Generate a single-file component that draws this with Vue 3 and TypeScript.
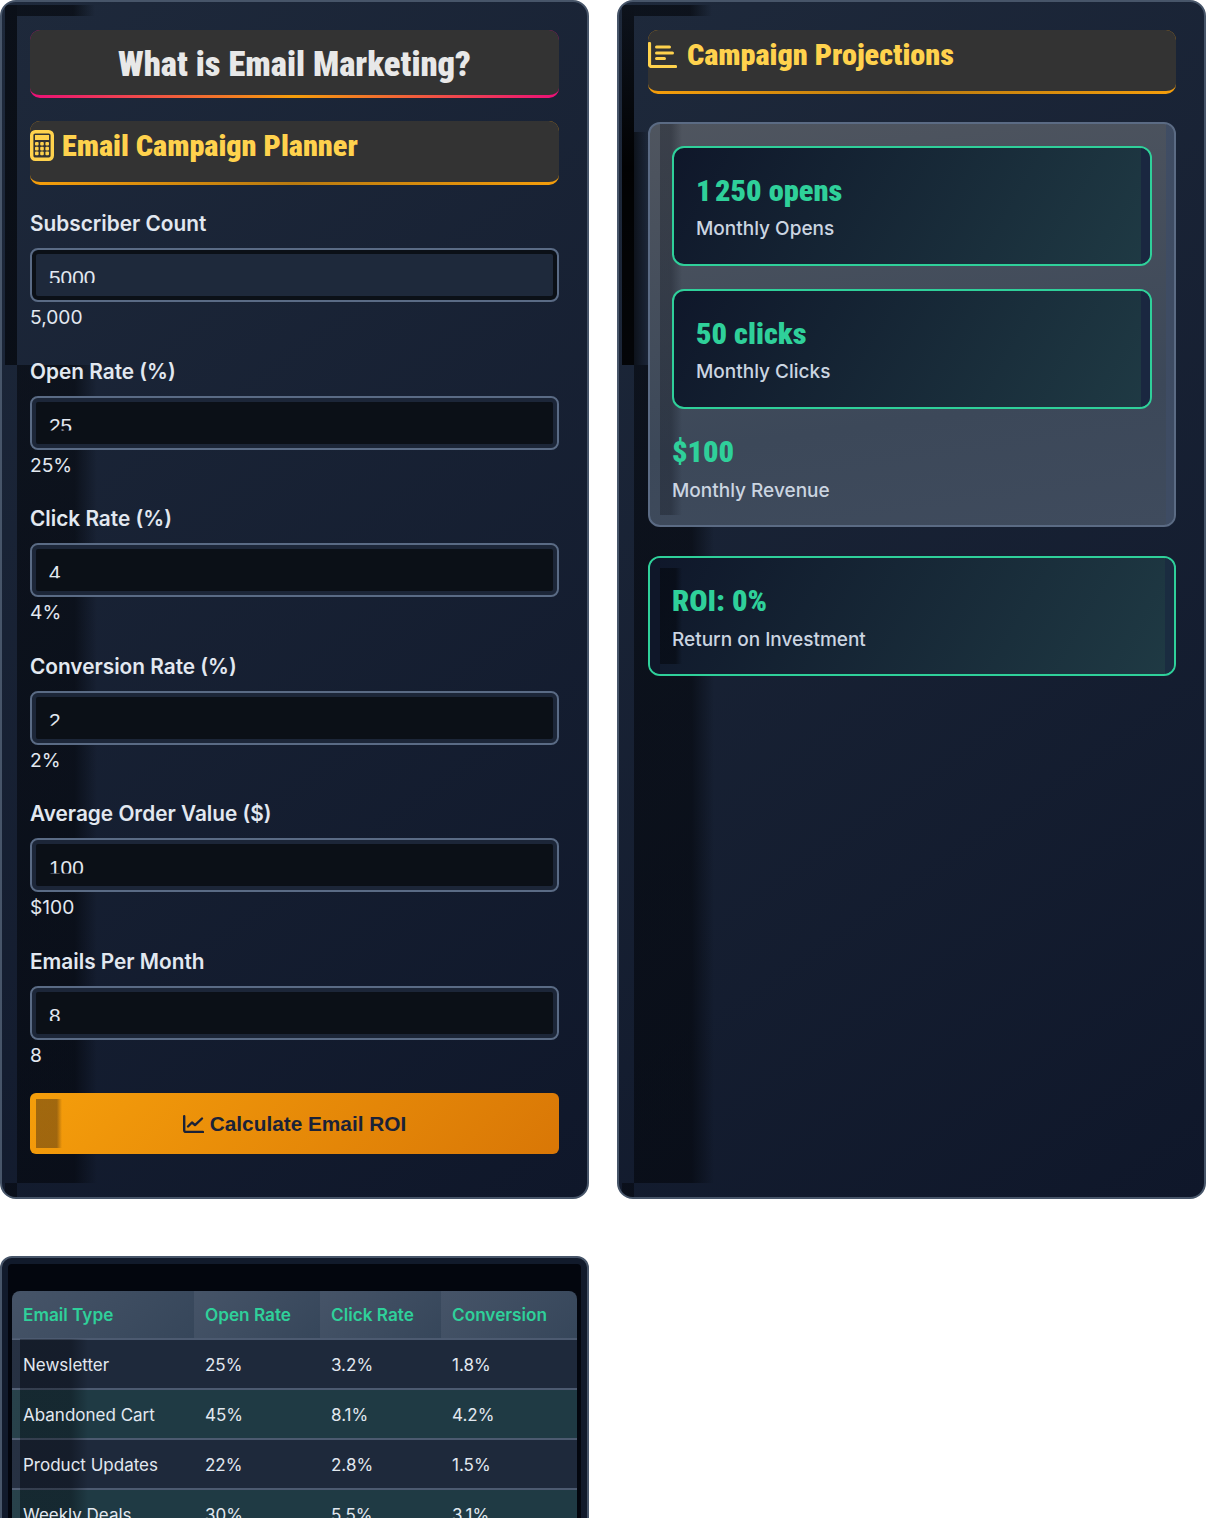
<template>
  <div class="page">
    <div class="columns">
      <section class="panel shaded">
        <h1 class="main-title">What is Email Marketing?</h1>
        <h2 class="sec-title">
          <svg class="ico-calc" viewBox="0 0 24 31" aria-hidden="true">
            <rect x="1.7" y="1.7" width="20.6" height="27.6" rx="3.5" fill="none" stroke="currentColor" stroke-width="3.4" />
            <rect x="5" y="5" width="14" height="5" fill="currentColor" />
            <g fill="currentColor">
              <rect v-for="d in calcDots" :key="d.x + '-' + d.y" :x="d.x" :y="d.y" width="3.6" height="3.6" rx="1" />
            </g>
          </svg>
          Email Campaign Planner
        </h2>

        <div v-for="f in fields" :key="f.label" class="field">
          <label class="field-label">{{ f.label }}</label>
          <div class="input-box" :class="{ active: f.active }">
            <input class="field-input" type="text" :value="f.value" />
          </div>
          <div class="field-hint">{{ f.hint }}</div>
        </div>

        <button class="calc-btn" type="button">
          <svg class="ico-line" viewBox="0 0 21 18" aria-hidden="true">
            <path d="M1.2 1.2v14a1.8 1.8 0 0 0 1.8 1.8H20" fill="none" stroke="currentColor" stroke-width="2.4" stroke-linecap="round" />
            <path d="M5 11.5l4-4 3 2.6L19 3.5" fill="none" stroke="currentColor" stroke-width="2.4" stroke-linecap="round" stroke-linejoin="round" />
          </svg>
          Calculate Email ROI
        </button>
      </section>

      <section class="panel shaded shaded-right">
        <h2 class="sec-title sec-title-right">
          <svg class="ico-bars" viewBox="0 0 29 26" aria-hidden="true">
            <path d="M1.5 1.5v21a2 2 0 0 0 2 2h24" fill="none" stroke="currentColor" stroke-width="3.2" stroke-linecap="round" />
            <path d="M8.5 5h13M8.5 11h16M8.5 16.5h8" fill="none" stroke="currentColor" stroke-width="3" stroke-linecap="round" />
          </svg>
          Campaign Projections
        </h2>

        <div class="results">
          <div class="metric card">
            <div class="metric-value">{{ opensText }}</div>
            <div class="metric-label">Monthly Opens</div>
          </div>
          <div class="metric card">
            <div class="metric-value">50 clicks</div>
            <div class="metric-label">Monthly Clicks</div>
          </div>
          <div class="metric plain">
            <div class="metric-value">$100</div>
            <div class="metric-label">Monthly Revenue</div>
          </div>
        </div>

        <div class="metric card roi">
          <div class="metric-value">ROI: 0%</div>
          <div class="metric-label">Return on Investment</div>
        </div>
      </section>
    </div>

    <section class="panel table-panel">
      <div class="table-wrap">
        <table>
          <thead>
            <tr>
              <th class="c1">Email Type</th>
              <th class="c2">Open Rate</th>
              <th class="c3">Click Rate</th>
              <th class="c4">Conversion</th>
            </tr>
          </thead>
          <tbody>
            <tr v-for="r in rows" :key="r[0]">
              <td v-for="c in r" :key="c">{{ c }}</td>
            </tr>
          </tbody>
        </table>
      </div>
    </section>
  </div>
</template>

<script setup lang="ts">
interface Field {
  label: string
  value: string
  hint: string
  active?: boolean
}

const fields: Field[] = [
  { label: 'Subscriber Count', value: '5000', hint: '5,000', active: true },
  { label: 'Open Rate (%)', value: '25', hint: '25%' },
  { label: 'Click Rate (%)', value: '4', hint: '4%' },
  { label: 'Conversion Rate (%)', value: '2', hint: '2%' },
  { label: 'Average Order Value ($)', value: '100', hint: '$100' },
  { label: 'Emails Per Month', value: '8', hint: '8' },
]

const opensText = '1\u202f250 opens'

const rows = [
  ['Newsletter', '25%', '3.2%', '1.8%'],
  ['Abandoned Cart', '45%', '8.1%', '4.2%'],
  ['Product Updates', '22%', '2.8%', '1.5%'],
  ['Weekly Deals', '30%', '5.5%', '3.1%'],
]

const calcDots: { x: number; y: number }[] = []
for (const y of [12, 16.8, 21.6]) {
  for (const x of [5, 10.2, 15.4]) calcDots.push({ x, y })
}
</script>

<style>
html,
body {
  margin: 0;
  background: #fff;
}
</style>

<style scoped>
.page {
  height: 1518px;
  overflow: hidden;
  font-family: Inter, 'Noto Sans', sans-serif;
  color: #e2e8f0;
}

.columns {
  display: grid;
  grid-template-columns: 589px 589px;
  gap: 28px;
  margin-bottom: 57px;
}

.panel {
  position: relative;
  box-sizing: border-box;
  border: 2px solid #475569;
  border-radius: 16px;
  background: linear-gradient(145deg, #1e293b, #0f172a);
  padding: 28px 28px 43px;
  overflow: hidden;
}

.panel > * {
  position: relative;
  z-index: 1;
}

/* the stray dark bands down the left side of the cards */
.shaded::before {
  content: '';
  position: absolute;
  inset: 0;
  z-index: 0;
  background:
    linear-gradient(90deg, rgba(2, 4, 8, 0.6) 72%, transparent) 15px 3px / 78px 11px no-repeat,
    linear-gradient(rgba(2, 4, 8, 0.68), rgba(2, 4, 8, 0.68)) 3px 3px / 12px 360px no-repeat,
    linear-gradient(rgba(2, 4, 8, 0.5), rgba(2, 4, 8, 0.5)) 3px 1181px / 12px 14px no-repeat,
    linear-gradient(90deg, rgba(2, 4, 8, 0.55) 72%, transparent) 15px 363px / 80px 818px no-repeat;
}

.shaded-right {
  padding-left: 29px;
}

.shaded-right::before {
  background:
    linear-gradient(90deg, rgba(2, 4, 8, 0.6) 72%, transparent) 15px 3px / 78px 11px no-repeat,
    linear-gradient(rgba(2, 4, 8, 0.6), rgba(0, 0, 0, 0.95) 45%, rgba(0, 0, 0, 0.85)) 3px 3px / 12px 360px no-repeat,
    linear-gradient(90deg, rgba(0, 0, 0, 0.5), transparent) 15px 130px / 14px 233px no-repeat,
    linear-gradient(rgba(2, 4, 8, 0.5), rgba(2, 4, 8, 0.5)) 3px 1181px / 12px 14px no-repeat,
    linear-gradient(90deg, rgba(2, 4, 8, 0.55) 72%, transparent) 15px 363px / 80px 818px no-repeat;
}

.main-title,
.sec-title {
  box-sizing: border-box;
  margin: 0;
  border-bottom: 3px solid transparent;
  border-radius: 10px;
  font-family: 'Roboto Condensed', Roboto, sans-serif;
  font-stretch: 75%;
  font-weight: 900;
}

.main-title {
  height: 68px;
  margin-bottom: 23px;
  padding-top: 13px;
  background:
    linear-gradient(#333, #333) padding-box,
    linear-gradient(90deg, #ec0f78, #f59e0b 50%, #ec0f78) border-box;
  color: #e8e8e8;
  font-size: 34.6px;
  line-height: 42px;
  text-align: center;
}

.sec-title {
  display: flex;
  align-items: flex-start;
  gap: 8px;
  height: 64px;
  padding-top: 7px;
  margin-bottom: 22px;
  background:
    linear-gradient(#333, #333) padding-box,
    linear-gradient(90deg, #f59e0b, #b87a10 50%, #f59e0b) border-box;
  color: #ffd24d;
  font-size: 30.2px;
  line-height: 36px;
}

.sec-title-right {
  gap: 10px;
  margin-bottom: 28px;
  padding-top: 7px;
}

.ico-calc {
  width: 24px;
  height: 31px;
  margin-top: 2px;
  flex: none;
}

.ico-bars {
  width: 29px;
  height: 26px;
  margin-top: 5px;
  flex: none;
}

.field {
  display: flex;
  flex-direction: column;
  margin-bottom: 22px;
}

.field-label {
  font-size: 20.8px;
  font-weight: 600;
  line-height: 32px;
  padding-top: 1px;
  margin-bottom: 8px;
  color: #e2e8f0;
}

.input-box {
  box-sizing: border-box;
  height: 54px;
  padding: 16px 17px 0;
  border: 2px solid #5a6b85;
  border-radius: 8px;
  background: #0b1017;
  box-shadow: inset 0 0 0 4px #1c2638;
}

.input-box.active {
  background: #1e293b;
  box-shadow: inset 0 0 0 4px #0b1017;
}

.field-input {
  display: block;
  box-sizing: border-box;
  width: 100%;
  height: 24px;
  margin: 0;
  padding: 0;
  border: 0;
  outline: none;
  background: transparent;
  color: #e2e8f0;
  font-family: 'Liberation Sans', Arial, sans-serif;
  font-size: 20.8px;
  /* the reference cuts the number off at the bottom */
  clip-path: inset(0 0 7px 0);
}

.field-hint {
  font-size: 19.2px;
  line-height: 30.6px;
  color: #e2e8f0;
}

.calc-btn {
  position: relative;
  display: flex;
  align-items: center;
  justify-content: center;
  gap: 6px;
  width: 100%;
  height: 61px;
  margin-top: 22px;
  padding: 1px 0 0;
  border: 0;
  border-radius: 6px;
  background: linear-gradient(135deg, #f59e0b, #d97706);
  color: #1a2238;
  font-family: 'Liberation Sans', Arial, sans-serif;
  font-size: 20.8px;
  font-weight: 700;
}

.calc-btn::before {
  content: '';
  position: absolute;
  left: 6px;
  top: 6px;
  bottom: 6px;
  width: 26px;
  background: linear-gradient(90deg, rgba(60, 40, 20, 0.45) 80%, transparent);
}

.ico-line {
  width: 21px;
  height: 18px;
  flex: none;
}

.results {
  box-sizing: border-box;
  height: 405px;
  padding: 22px;
  border: 2px solid #5b6b84;
  border-radius: 12px;
  background: linear-gradient(172deg, #4f555f, #3c4859 70%, #3f4b5d);
  margin-bottom: 29px;
  overflow: hidden;
  position: relative;
}

.results::before {
  content: '';
  position: absolute;
  inset: 0;
  background:
    linear-gradient(90deg, rgba(20, 24, 34, 0.35) 50%, transparent) 10px 0 / 22px 391px no-repeat,
    linear-gradient(rgba(62, 76, 100, 0.9), rgba(62, 76, 100, 0.9)) right 0 top 0 / 8px 100% no-repeat;
}

.metric {
  position: relative;
  box-sizing: border-box;
}

.results .metric + .metric {
  margin-top: 23px;
}

.results .metric.plain {
  margin-top: 22px;
}

.card {
  height: 120px;
  padding: 22px;
  border: 2px solid #2fd09a;
  border-radius: 12px;
  background: linear-gradient(120deg, #0f172a, #1f3a44);
  overflow: hidden;
}

.card::before {
  content: '';
  position: absolute;
  top: 0;
  bottom: 0;
  right: 0;
  width: 9px;
  background: #1a2740;
}

.roi::before {
  background: #1a2c40;
}

.roi::after {
  content: '';
  position: absolute;
  left: 0;
  top: 0;
  bottom: 0;
  width: 32px;
  background:
    linear-gradient(90deg, rgba(2, 4, 8, 0.5) 70%, transparent) 10px 10px / 22px 96px no-repeat,
    linear-gradient(#0f1729, #0f1729) 0 0 / 10px 100% no-repeat;
}

.metric-value {
  position: relative;
  z-index: 1;
  padding-top: 1px;
  font-family: 'Roboto Condensed', Roboto, sans-serif;
  font-stretch: 75%;
  font-size: 30.4px;
  font-weight: 900;
  line-height: 40px;
  color: #2fd09a;
}

.metric-label {
  position: relative;
  z-index: 1;
  margin-top: 5px;
  font-size: 19px;
  font-weight: 500;
  line-height: 26px;
  color: #cbd5e1;
}

.roi .metric-label,
.plain .metric-label {
  margin-top: 6px;
}

.table-panel {
  width: 589px;
  height: 300px;
  padding: 33px 10px 0;
  background: #03060e;
  box-shadow: inset 0 0 0 6px #111a2b;
  border-radius: 12px;
}

.table-wrap {
  position: relative;
  border-radius: 8px 8px 0 0;
  overflow: hidden;
}

.table-wrap::after {
  content: '';
  position: absolute;
  left: 0;
  right: 0;
  top: 48px;
  bottom: 0;
  background:
    linear-gradient(rgba(255, 255, 255, 0.04), rgba(255, 255, 255, 0.04)) 0 0 / 8px 100% no-repeat,
    linear-gradient(90deg, rgba(2, 4, 8, 0.32) 75%, transparent) 8px 0 / 68px 100% no-repeat;
}

table {
  width: 565px;
  table-layout: fixed;
  border-collapse: collapse;
  font-size: 17px;
}

th,
td {
  position: relative;
  z-index: 1;
  box-sizing: border-box;
  padding: 0 11px;
  text-align: left;
  border-bottom: 2px solid #4c5a70;
}

th {
  height: 48px;
  padding-top: 1px;
  font-size: 17.2px;
  font-weight: 600;
  color: #2fd09a;
  background: linear-gradient(135deg, #465468, #36465a);
}

td {
  height: 50px;
  padding-top: 2px;
  color: #e2e8f0;
}

tbody tr:nth-child(odd) {
  background: #1e293b;
}

tbody tr:nth-child(even) {
  background: #1f3a44;
}

.c1 {
  width: 182px;
}

.c2 {
  width: 126px;
}

.c3 {
  width: 121px;
}

.c4 {
  width: 136px;
}
</style>
